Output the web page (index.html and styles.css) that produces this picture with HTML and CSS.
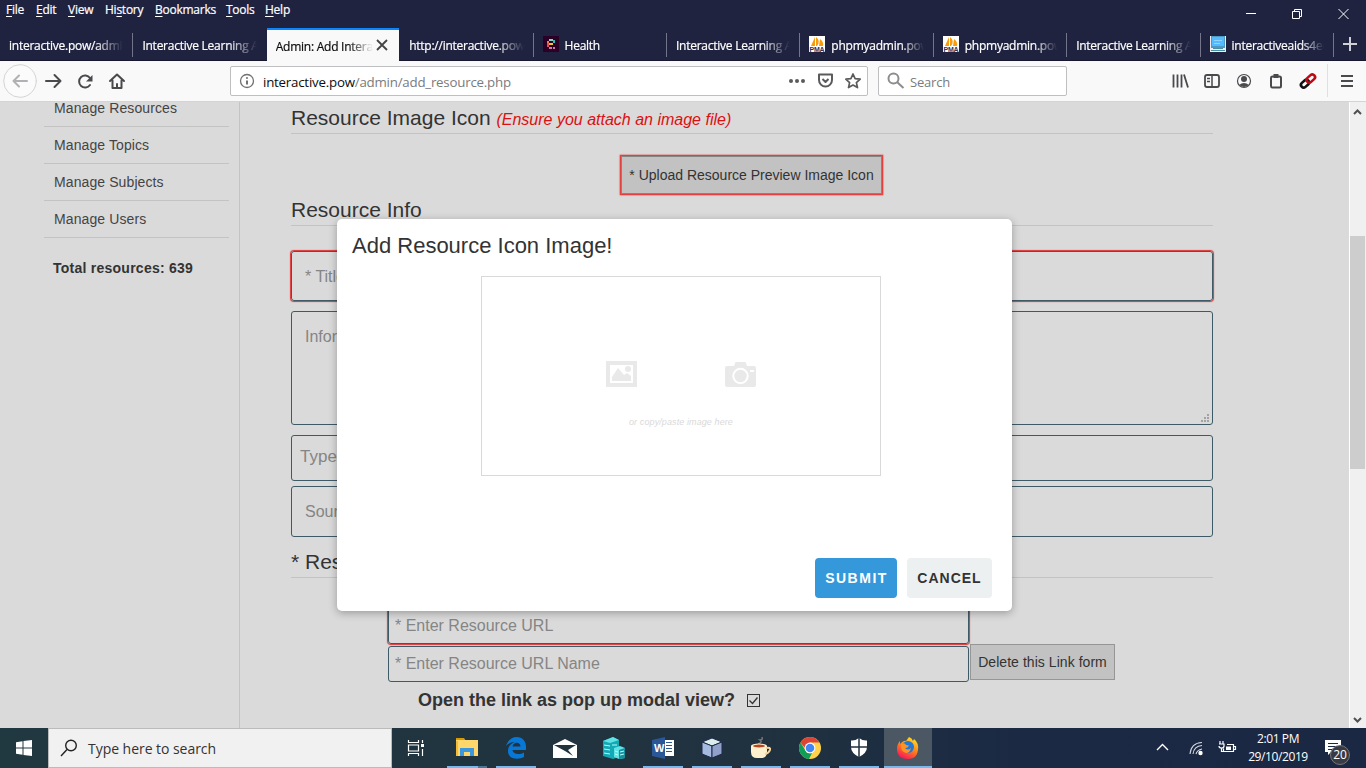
FILE: index.html
```html
<!DOCTYPE html>
<html lang="en">
<head>
<meta charset="utf-8">
<title>Admin: Add Interactive Resource</title>
<link rel="stylesheet" href="styles.css">
</head>
<body>
<div class="screen">
  <header class="titlebar">
    <nav class="menu"><span class="m-file"><u>F</u>ile</span><span class="m-edit"><u>E</u>dit</span><span class="m-view"><u>V</u>iew</span><span class="m-hist">Hi<u>s</u>tory</span><span class="m-book"><u>B</u>ookmarks</span><span class="m-tools"><u>T</u>ools</span><span><u>H</u>elp</span></nav>
    <div class="window-controls">
      <svg width="132" height="28" fill="none" stroke="#fff"><path d="M12 13.5h10"/><path d="M58.5 11.500h7v7h-7zM60.500 11v-1.500h7v7H66M104.500 9l10 10M114.500 9l-10 10"/></svg>
    </div>
  </header>
  <div class="tabs">
    <div class="tab"><span class="label">interactive.pow/admin</span></div>
    <div class="tab no-sep"><span class="label">Interactive Learning Aids</span></div>
    <div class="tab active"><span class="label">Admin: Add Interactive</span><svg class="close" width="12" height="12" stroke="#444" stroke-width="1.800"><path d="M1 1l10 10M11 1L1 11"/></svg></div>
    <div class="tab"><span class="label">http://interactive.pow</span></div>
    <div class="tab icon"><svg width="16" height="16"><path fill="#2b0026" d="M0 0h16v16H0z"/><path fill="#8ed0bd" d="M6 3h4v2H6z"/><path fill="#f47c3c" d="M4 5h2v2H4z"/><path fill="#edc72f" d="M6 7h4v2H6z"/><path fill="#e94b55" d="M4 7h2v4H4z"/><path fill="#3eb4b2" d="M10 4h2v3h-2z"/><path fill="#df70af" d="M6 11h3v2H6zM10 11h2v2h-2z"/></svg><span class="label">Health</span></div>
    <div class="tab"><span class="label">Interactive Learning Aids</span></div>
    <div class="tab icon"><svg class="pma" width="16" height="16"><path fill="#fff" d="M0 0h16v16H0z"/><path fill="#f89c0e" d="M6 1v9H2zM7 1q5 4 1 9H7zM11 3q4 3 3 7h-4z"/><text x="0.500" y="15.500">PMA</text></svg><span class="label">phpmyadmin.pow</span></div>
    <div class="tab icon"><svg class="pma" width="16" height="16"><path fill="#fff" d="M0 0h16v16H0z"/><path fill="#f89c0e" d="M6 1v9H2zM7 1q5 4 1 9H7zM11 3q4 3 3 7h-4z"/><text x="0.500" y="15.500">PMA</text></svg><span class="label">phpmyadmin.pow</span></div>
    <div class="tab"><span class="label">Interactive Learning Aids</span></div>
    <div class="tab icon"><svg width="16" height="16"><path fill="#eee" d="M0 0h16v16H0z"/><path fill="#4b9ac4" d="M1 0h14v12H1z"/><path fill="#55baff" d="M2 1h12v9H2z"/><path stroke="#93d5ff" d="M4 4.500h8M4 7.500h6"/><path fill="#4a8fa6" d="M3 12h10v1H3zM1 14h14v1H1z"/></svg><span class="label">interactiveaids4education</span></div>
    <div class="newtab"><svg width="14" height="14" stroke="#d0d0d8" stroke-width="2"><path d="M7 0v14M0 7h14"/></svg></div>
  </div>
  <div class="toolbar">
    <svg class="nav-icons" width="130" height="40" fill="none" stroke="#4a4a4c" stroke-width="2" stroke-linecap="round" stroke-linejoin="round"><circle cx="20" cy="20" r="16.300" fill="#fbfbfb" stroke="#d4d4d6" stroke-width="1"/><path stroke="#b1b1b3" d="M13.500 20H27M19 14.500L13.500 20l5.500 5.500"/><path d="M46 20h14.500M54.500 14l6 6-6 6"/><path d="M90 24a6 6 0 1 1 0-7"/><path fill="#4a4a4c" stroke="none" d="M86 20.500h6.500V14z"/><path d="M110 20l7-6.500 7 6.500M112.500 19.500v7.500h9v-7.500M117 27v-4" /></svg>
    <div class="urlbar">
      <svg width="16" height="16" fill="none" stroke="#717173" stroke-width="1.300"><circle cx="8" cy="8" r="6.500"/><path stroke-width="2" d="M8 7.500v4M8 4.300v1.500"/></svg>
      <span class="url"><b>interactive.pow</b>/admin/add_resource.php</span>
      <svg class="url-actions" width="76" height="18" fill="none" stroke="#5b5b5d" stroke-width="2" stroke-linejoin="round"><g fill="#5b5b5d" stroke="none"><circle cx="3" cy="9" r="2"/><circle cx="9" cy="9" r="2"/><circle cx="15" cy="9" r="2"/></g><path d="M31 2.500h13v5.500a6.500 6.500 0 0 1-13 0zM34.500 7l3 3 3-3"/><path stroke-width="1.700" d="M65 2l2.100 4.700 5.100.500-3.800 3.400 1.100 5-4.500-2.600-4.500 2.600 1.100-5-3.800-3.400 5.100-.500z"/></svg>
    </div>
    <div class="searchbar"><svg width="18" height="18" fill="none" stroke="#8d8d8f" stroke-width="2"><circle cx="6.500" cy="6.500" r="5"/><path d="M10 10l6.500 6"/></svg><span>Search</span></div>
    <svg class="tool-icons" width="196" height="40" fill="none" stroke="#4a4a4c" stroke-width="2"><path stroke-width="1.800" d="M3.500 13.500v13M7.500 13.500v13M11.500 13.500v13M14 13.500l4 13"/><rect x="35" y="14" width="14" height="12" rx="2" stroke-width="1.800"/><path stroke-width="1.500" d="M42 14v12M37 17.500h3M37 20.500h3"/><circle cx="74" cy="20" r="6.500" stroke-width="1.200"/><circle cx="74" cy="18" r="3" fill="#4a4a4c" stroke="none"/><path fill="#4a4a4c" stroke="none" d="M69 24q5-4 10 0-5 4-10 0"/><rect x="101" y="15.500" width="10" height="11" rx="1.500"/><path stroke-width="4" d="M103.500 15h5"/><g transform="rotate(-42 138 20)" stroke-width="2.600"><rect stroke="#111" x="129.500" y="17.300" width="9" height="5.400" rx="2.700"/><rect stroke="#bd0916" x="137" y="17.300" width="9.500" height="5.400" rx="2.700"/></g><path stroke="#e0e0e1" stroke-width="1" d="M157.500 3v33"/><path d="M171 15h12M171 20h12M171 25h12"/></svg>
  </div>
  <div class="viewport">
    <aside class="sidebar">
      <ul><li>Manage Resources</li><li>Manage Topics</li><li>Manage Subjects</li><li>Manage Users</li></ul>
      <p>Total resources: 639</p>
    </aside>
    <main class="form">
      <h2 class="first">Resource Image Icon <em>(Ensure you attach an image file)</em></h2>
      <div class="upload-row"><button class="gray upload">* Upload Resource Preview Image Icon</button></div>
      <h2 class="info">Resource Info</h2>
      <div class="field title invalid">* Title</div>
      <div class="field area">Information<svg class="grip" width="9" height="9" fill="#a2a2a2"><path d="M6 0h2v2H6zM3 3h2v2H3zM6 3h2v2H6zM0 6h2v2H0zM3 6h2v2H3zM6 6h2v2H6z"/></svg></div>
      <div class="field type">Type</div>
      <div class="field source">Source</div>
      <h2 class="links">* Resource Links</h2>
      <section class="link-form">
        <div class="link-row"><div class="link-fields"><div class="field url-field invalid">* Enter Resource URL</div><div class="field name-field">* Enter Resource URL Name</div></div><button class="gray delete">Delete this Link form</button></div>
        <div class="popup-option"><span>Open the link as pop up modal view?</span><svg width="13" height="13" fill="none" stroke="#333"><rect x=".5" y=".5" width="12" height="12"/><path stroke-width="1.300" d="M2.500 6.500l3 3 5-6"/></svg></div>
      </section>
    </main>
    <div class="scrollbar"><svg width="17" height="17" fill="none" stroke="#505050" stroke-width="2"><path d="M4 12l3.500-3.500L11 12"/></svg><div class="thumb"></div><svg width="17" height="17" fill="none" stroke="#505050" stroke-width="2"><path d="M4 7l3.500 3.500L11 7"/></svg></div>
    <div class="modal">
      <h3>Add Resource Icon Image!</h3>
      <div class="drop">
        <div class="pickers"><svg width="31" height="26"><path fill="#e9e9e9" fill-rule="evenodd" d="M0 0h31v26H0zM4 4v18h23V4z"/><path fill="#e9e9e9" d="M6 20v-4l6-9 6 7 3-2 4 3v5z"/><circle cx="22" cy="8" r="3" fill="#e9e9e9"/></svg><svg width="31" height="25"><path fill="#e9e9e9" d="M2 4h7l1.500-4h10L22 4h7q2 0 2 2v17q0 2-2 2H2q-2 0-2-2V6q0-2 2-2"/><circle cx="15.500" cy="14" r="7.200" fill="#e9e9e9" stroke="#fff" stroke-width="2"/><path fill="#fff" d="M25 8h4v2h-4z"/></svg></div>
        <i>or copy/paste image here</i>
      </div>
      <div class="actions"><button class="submit">SUBMIT</button><button class="cancel">CANCEL</button></div>
    </div>
  </div>
  <footer class="taskbar">
    <div class="start"><svg width="16" height="16" fill="#fff"><path d="M0 2.200l6.500-.9v6.200H0zM7.500 1.100L16 0v7.500H7.500zM0 8.500h6.500v6.200L0 13.800zM7.500 8.500H16V16l-8.500-1.100z"/></svg></div>
    <div class="task-search"><svg width="18" height="18" fill="none" stroke="#222" stroke-width="1.400"><circle cx="11" cy="6.500" r="5.300"/><path d="M7 10.500L1 17"/></svg><span>Type here to search</span></div>
    <div class="app view"><svg width="18" height="18" fill="none" stroke="#fff" stroke-width="1.200"><path d="M1.500 1v2.500h10V1M1.500 17v-2.500h10V17M1.500 6h10v6h-10zM15.500 1v3M15.500 10v7"/><path fill="#fff" stroke="none" d="M14 5h3v3h-3z"/></svg></div>
    <div class="apps">
      <div class="app run explorer"><svg width="22" height="20"><path fill="#d79a00" d="M0 0h8l2 3H0z"/><path fill="#ffd76b" d="M0 2h22v16H0z"/><path fill="#f5bb37" d="M0 3h2v15H0z"/><path fill="#3c97dc" d="M4 10h14v8h-4v-4H8v4H4z"/></svg></div>
      <div class="app run"><svg width="20" height="22"><path fill="#0878d7" d="M0 9C2 3 6 0 10.500 0 17 0 20 4.500 20 10v3H6.500c.5 4.200 7 5.400 11.500 2.500v4.500C12 23 2 22.500 2 14 2 9 5.500 6.300 9 5 5 5 2 6.500 0 9m6.500.5h8c0-5-7-5-8 0"/></svg></div>
      <div class="app"><svg width="24" height="19"><path fill="#fff" d="M0 6l12-6 12 6v13H0z"/><path fill="#20343f" d="M1 6h22l-8 5 5 6-8-5z"/></svg></div>
      <div class="app"><svg width="22" height="22"><path fill="#13a9b5" d="M0 4l10-4 6 3v17l-6 2L0 19z"/><path fill="#5fe3e5" d="M0 4l10-4 6 3-9 3zM11 11l6-2 5 2v10l-6 1-5-2z"/><path fill="#16909e" d="M16 13l6-2v10l-6 1z"/><path stroke="#b6ffff" stroke-width="1" d="M1 8l6 1M1 12l6 1M1 16l6 1M9 8h5M17 15l4-1M17 18l4-1M12 14l3 1M12 17l3 1"/></svg></div>
      <div class="app run"><svg class="word" width="22" height="22"><path fill="#fff" d="M12 3h10v16H12z"/><path stroke="#2b5797" d="M14 5.500h6M14 8.500h6M14 11.500h6M14 14.500h6"/><path fill="#2b5797" d="M0 3l13-3v22L0 19z"/><text x="2" y="15">W</text></svg></div>
      <div class="app run"><svg width="22" height="22" stroke="#20264b"><path fill="#dbefea" d="M1 5l10-4 10 4-10 4z"/><path fill="#a5badf" d="M1 5l10 4v12L1 17z"/><path fill="#8fa1c8" d="M21 5L11 9v12l10-4z"/></svg></div>
      <div class="app run"><svg width="22" height="22"><path fill="none" stroke="#777" stroke-width="1.500" d="M8 7q5-2 2-4 3 0 2-3"/><path fill="#fff0ce" d="M1 9h16v6q0 6-6 6H7q-6 0-6-6z"/><ellipse cx="9" cy="9" rx="8" ry="2.500" fill="#fff0ce"/><ellipse cx="9" cy="9" rx="6" ry="1.500" fill="#b64622"/><path fill="none" stroke="#f8d49c" stroke-width="2" d="M16 11q5-1 4 2t-5 4"/></svg></div>
      <div class="app run"><svg width="22" height="22"><circle cx="11" cy="11" r="11" fill="#ffd24a"/><path fill="#db4437" d="M1.500 5.500a11 11 0 0 1 19 0H11L6 11z"/><path fill="#0f9d58" d="M1.500 5.500L8 16h5l-3 6A11 11 0 0 1 1.500 5.500"/><circle cx="11" cy="11" r="5.400" fill="#fff"/><circle cx="11" cy="11" r="4.300" fill="#4285f4"/></svg></div>
      <div class="app run"><svg width="18" height="20"><path fill="#fff" d="M9 0q4 3 8 2.500V9q0 6-8 10Q1 15 1 9V2.500Q5 3 9 0"/><path stroke="#20313f" stroke-width="1.500" d="M9 0v20M0 9h18"/></svg></div>
      <div class="app run current"><svg width="24" height="24"><defs><linearGradient id="fox" x1=".8" y1="0" x2=".3" y2="1"><stop stop-color="#ffe72e"/><stop offset=".45" stop-color="#ff8b16"/><stop offset="1" stop-color="#f91459"/></linearGradient></defs><path fill="url(#fox)" d="M13 1q3 1 4 4l1-2q5 4 4 11-1 9-10 9Q1 23 1 13q0-5 3-8v3q4-4 6-3z"/><circle cx="12" cy="11" r="6" fill="#2378d5"/><path fill="#ff9422" d="M5 8q4-2 5 1l3 .500q-1 2.500-4 2.500 3 3 6 0-1 5-5 5-6-2-5-9"/></svg></div>
    </div>
    <div class="tray"><svg width="84" height="24" fill="none" stroke="#fff" stroke-width="1.400"><path d="M3 14l5.500-5.500L14 14"/><g stroke-width="1.100" stroke="#d5d8de"><path d="M36 18Q37 7 48 6.500M39 18q1-8 9-8.500M42 18q1-4 6-5"/></g><circle cx="46.500" cy="17" r="1.500" fill="#fff"/><g stroke-width="1.200"><path d="M73 8.500h6.500v7h-10v-3M80 10.500h1.500v3H80M66 5v3M69 5v3M65 8h5v2q0 2-2.500 2T65 10M67.500 12v3.500h2"/></g><path fill="#fff" stroke="none" d="M72 10.500h5v3.500h-5z"/></svg></div>
    <div class="clock"><span>2:01 PM</span><span>29/10/2019</span></div>
    <div class="notice"><svg width="28" height="28"><path fill="#fff" d="M0 2h16v12H6l-3 3v-3H0z"/><path stroke="#1c2944" d="M3 5.500h10M3 8.500h10M3 11.500h7"/><circle cx="15" cy="17" r="9.500" fill="#383b43" stroke="#777"/><text x="8.200" y="21.300">20</text></svg></div>
  </footer>
</div>
</body>
</html>
```
FILE: styles.css
```css
* { box-sizing: border-box; }
body { margin: 0; overflow: hidden; font-family: "Liberation Sans", Arial, sans-serif; color: #333; }
svg { display: block; flex: none; }
button { font-family: inherit; padding: 0; }
.screen { width: 1366px; height: 768px; display: flex; flex-direction: column; }
.titlebar { height: 28px; background: #202340; color: #fff; display: flex; justify-content: space-between; }
.menu { display: flex; padding-left: 6px; font: 12px/20px "Open Sans", sans-serif; letter-spacing: -.25px; -webkit-text-stroke: .2px #fff; }
.menu u { text-underline-offset: 2px; }
.m-file { width: 30px; } .m-edit { width: 32px; } .m-view { width: 37px; } .m-hist { width: 50px; } .m-book { width: 71px; } .m-tools { width: 39px; }
.window-controls { width: 132px; }
.tabs { height: 33px; background: #202340; display: flex; border-bottom: 1px solid #15182f; }
.tab { flex: none; width: 133.4px; padding: 0 10px 0 9px; display: flex; align-items: center; gap: 6px; color: #fff; font: 12px/30px "Open Sans", sans-serif; letter-spacing: -.25px; background: linear-gradient(#74758a, #74758a) right 5px / 1px 24px no-repeat; }
.tab .label { flex: 1; min-width: 0; overflow: hidden; white-space: nowrap; padding-top: 3px; -webkit-text-stroke: .2px currentColor; -webkit-mask-image: linear-gradient(90deg, #000 75%, transparent); mask-image: linear-gradient(90deg, #000 75%, transparent); }
.tab.no-sep { background: none; }
.tab.active { height: 33px; background: #f9f9fa; border-top: 2px solid #0a84ff; color: #0c0c0d; line-height: 26px; width: 132px; margin-right: 1.400px; }
.tab.active .label { padding-top: 2px; }
.tab.active .close { margin: 0 1px 2px -3px; }
.newtab { flex: 1; display: grid; place-items: center; }
.pma text { font: bold 7px "Liberation Sans"; fill: #335; }
.toolbar { height: 41px; flex: none; background: #f9f9fa; display: flex; align-items: center; border-bottom: 1px solid #d4d4d6; }
.nav-icons { margin-right: 100px; }
.urlbar, .searchbar { height: 30px; border: 1px solid #bfbfc2; border-radius: 2px; background: #fff; display: flex; align-items: center; font: 13.3px/28px "Open Sans", sans-serif; color: #7b7b7d; }
.urlbar { width: 638px; padding: 0 5px 0 8px; }
.url { margin: 2px 0 0 8px; letter-spacing: -.22px; }
.url b { font-weight: 400; color: #0c0c0d; }
.url-actions { margin-left: auto; margin-right: -2px; }
.searchbar { width: 189px; margin-left: 10px; padding-left: 8px; gap: 5px; }
.searchbar span { padding-top: 2px; font-size: 13px; letter-spacing: -.2px; }
.tool-icons { margin-left: auto; }
.viewport { position: relative; height: 626px; flex: none; background: #dadada; display: flex; overflow: hidden; }
.sidebar { width: 240px; border-right: 1px solid #c3c3c3; padding-left: 44px; letter-spacing: .1px; }
.sidebar ul { list-style: none; padding: 0; margin: -12px 0 0; width: 185px; font-size: 14px; }
.sidebar li { height: 37px; border-bottom: 1px solid #c3c3c3; padding-left: 10px; line-height: 36px; color: #444; }
.sidebar p { margin: 20px 0 0 9px; font-weight: bold; font-size: 14px; line-height: 20px; letter-spacing: .25px; }
.form { width: 922px; margin-left: 51px; }
h2 { font-size: 21px; font-weight: 400; line-height: 30px; border-bottom: 1px solid #c3c3c3; margin: 0; white-space: nowrap; height: 31px; }
h2 em { color: #dc1010; font-size: 16px; }
.first { margin-top: 1px; }
.gray { background: #c2c2c2; border: 1px solid #969696; color: #333; font-size: 14px; }
.upload-row { height: 61px; padding: 22px 1px 0 0; display: flex; justify-content: center; }
.upload { width: 261px; height: 38px; border: 1px solid #868686; box-shadow: 0 0 1px 1.300px #e23333; }
.field { border: 1px solid #3e5a67; border-radius: 3px; color: #858585; font-size: 16px; padding-left: 13px; display: flex; align-items: center; }
.invalid { box-shadow: 0 0 1px 1px #e23333; }
.title { height: 50px; margin-top: 25px; padding-top: 1px; }
.area { position: relative; height: 114px; margin-top: 10px; align-items: flex-start; padding-top: 16px; }
.grip { position: absolute; right: 2px; bottom: 1px; }
.type { height: 46px; margin-top: 10px; padding-left: 8px; padding-bottom: 2px; font-size: 17px; }
.source { height: 51px; margin-top: 5px; }
.links { margin-top: 10px; }
.link-form { margin-left: 97px; padding-top: 30px; }
.link-row { display: flex; align-items: flex-end; gap: 1px; }
.link-fields { width: 581px; }
.url-field { height: 36px; padding-left: 6px; }
.name-field { height: 36px; margin-top: 2px; padding-left: 6px; }
.delete { width: 145px; height: 36px; margin-bottom: 2px; letter-spacing: .05px; }
.popup-option { display: flex; align-items: center; gap: 12px; font-size: 18px; font-weight: bold; line-height: 22px; margin: 7px 0 0 30px; }
.scrollbar { width: 17px; margin-left: auto; background: #f0f0f0; border-left: 1px solid #fff; display: flex; flex-direction: column; justify-content: space-between; }
.thumb { height: 233px; width: 15px; background: #cdcdcd; margin-top: 117px; margin-bottom: auto; }
.modal { position: absolute; left: 337px; top: 117px; width: 675px; height: 392px; background: #fff; border-radius: 5px; box-shadow: 0 2px 8px rgba(0,0,0,.3); padding: 12px 20px 13px 15px; display: flex; flex-direction: column; }
h3 { margin: 0; font-size: 22px; font-weight: 400; line-height: 30px; height: 45px; }
.drop { width: 400px; height: 200px; border: 1px solid #d9d9d9; margin-left: 129px; padding-top: 84px; display: flex; flex-direction: column; align-items: center; color: #d9d9d9; }
.drop i { font: italic 9px/12px "Liberation Sans"; letter-spacing: .1px; margin-top: 29px; }
.pickers { display: flex; gap: 88px; align-items: center; }
.actions { margin-top: auto; display: flex; gap: 10px; justify-content: flex-end; }
.actions button { height: 40px; border: 0; border-radius: 4px; font-size: 14px; font-weight: bold; padding-left: 1px; }
.submit { background: #3498db; color: #fff; width: 82px; letter-spacing: 1.500px; }
.actions .cancel { background: #ecf0f1; color: #333; width: 85px; letter-spacing: 1px; padding: 0; }
.taskbar { height: 40px; background: linear-gradient(90deg, #203840, #20323f 55%, #1b2944 75%, #1b2844); color: #fff; display: flex; font-family: "Open Sans", sans-serif; }
.start { width: 48px; display: grid; place-items: center; }
.task-search { width: 344px; border: 1px solid #bbb; background: #f1f1f1; display: flex; align-items: center; padding-left: 11px; gap: 10px; color: #333; font-size: 14px; letter-spacing: -.04px; }
.app { width: 49px; height: 40px; display: grid; place-items: center; position: relative; }
.view { width: 48px; margin-right: 1px; }
.apps { display: flex; margin-left: 1px; }
.run { background: linear-gradient(#78b9ed, #78b9ed) 5px 38px / 40px 2px no-repeat; }
.explorer { background: linear-gradient(90deg, #78b9ed 31px, #487798 31px) 5px 38px / 40px 2px no-repeat; }
.current { background: linear-gradient(#78b9ed, #78b9ed) 0 38px / 48px 2px no-repeat, #4b5864; width: 48px; margin-left: 1px; }
.word text { font: bold 11px "Liberation Sans"; fill: #fff; }
.tray { margin-left: auto; width: 84px; display: flex; align-items: center; }
.clock { width: 76px; margin-left: 2px; margin-right: 1px; display: flex; flex-direction: column; align-items: center; font-size: 12px; line-height: 18px; padding-top: 2px; letter-spacing: -.4px; }
.notice { width: 49px; padding: 10px 0 0 8px; }
.notice text { font: 12px "Open Sans"; fill: #fff; }
```
